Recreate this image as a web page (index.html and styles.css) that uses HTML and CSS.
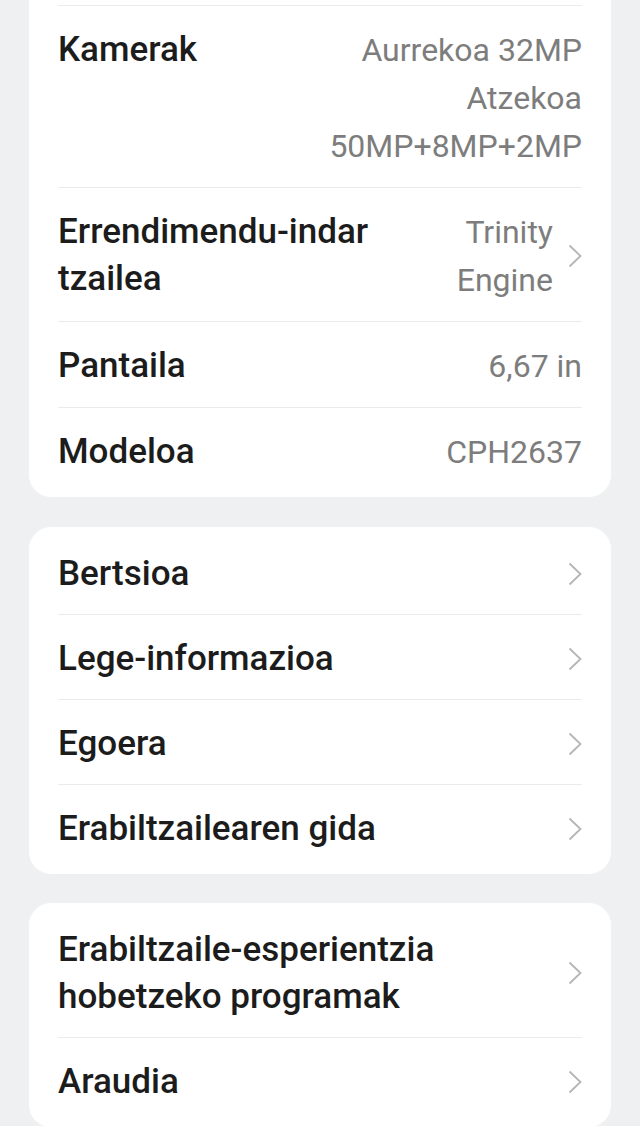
FILE: index.html
```html
<!DOCTYPE html>
<html lang="eu">
<head>
    <meta charset="UTF-8">
    <meta name="viewport" content="width=device-width, initial-scale=1.0">
    <title>Telefonoari buruz</title>
    <link rel="stylesheet" href="styles.css">
</head>
<body>
    <div class="card card-cut">
        <div class="row">
            <div class="label">Kamerak</div>
            <div class="value">Aurrekoa 32MP<br>Atzekoa<br>50MP+8MP+2MP</div>
        </div>
        <div class="row">
            <div class="label">Errendimendu-indar tzailea</div>
            <div class="value">Trinity<br>Engine</div>
            <svg class="chevron" viewBox="0 0 14 24"><path d="M1.5 1.5 L12.5 12 L1.5 22.5"/></svg>
        </div>
        <div class="row">
            <div class="label">Pantaila</div>
            <div class="value">6,67 in</div>
        </div>
        <div class="row">
            <div class="label">Modeloa</div>
            <div class="value">CPH2637</div>
        </div>
    </div>

    <div class="card">
        <div class="row">
            <div class="label">Bertsioa</div>
            <svg class="chevron" viewBox="0 0 14 24"><path d="M1.5 1.5 L12.5 12 L1.5 22.5"/></svg>
        </div>
        <div class="row">
            <div class="label">Lege-informazioa</div>
            <svg class="chevron" viewBox="0 0 14 24"><path d="M1.5 1.5 L12.5 12 L1.5 22.5"/></svg>
        </div>
        <div class="row">
            <div class="label">Egoera</div>
            <svg class="chevron" viewBox="0 0 14 24"><path d="M1.5 1.5 L12.5 12 L1.5 22.5"/></svg>
        </div>
        <div class="row">
            <div class="label">Erabiltzailearen gida</div>
            <svg class="chevron" viewBox="0 0 14 24"><path d="M1.5 1.5 L12.5 12 L1.5 22.5"/></svg>
        </div>
    </div>

    <div class="card">
        <div class="row">
            <div class="label">Erabiltzaile-esperientzia<br>hobetzeko programak</div>
            <svg class="chevron" viewBox="0 0 14 24"><path d="M1.5 1.5 L12.5 12 L1.5 22.5"/></svg>
        </div>
        <div class="row">
            <div class="label">Araudia</div>
            <svg class="chevron" viewBox="0 0 14 24"><path d="M1.5 1.5 L12.5 12 L1.5 22.5"/></svg>
        </div>
    </div>
</body>
</html>
```

FILE: styles.css
```css
body {
    margin: 0;
    padding: 0 29px;
    background: #eff0f2;
    font-family: Roboto, 'Noto Sans', sans-serif;
}

.card {
    background: #fff;
    border-radius: 22px;
    padding: 3px 29px 5px;
    margin-bottom: 29px;
}

/* top of this card is scrolled off the screen */
.card-cut {
    border-top-left-radius: 0;
    border-top-right-radius: 0;
    padding-top: 5px;
    padding-bottom: 4px;
    margin-bottom: 30px;
}

.card-cut .row:first-child {
    border-top: 1px solid #ebebeb;
}

.row {
    display: flex;
    align-items: flex-start;
    padding: 20px 0 17px;
    line-height: 47px;
}

.row + .row {
    border-top: 1px solid #ebebeb;
}

.label {
    flex: 1;
    font-size: 35px;
    font-weight: 500;
    color: #1c1c1c;
}

.value {
    margin-left: 20px;
    font-size: 32px;
    line-height: 48px;
    color: #7d7d7d;
    text-align: right;
    white-space: nowrap;
}

.chevron {
    align-self: center;
    width: 14px;
    height: 24px;
    margin-left: 15px;
    fill: none;
    stroke: #b5b5b5;
    stroke-width: 1.8;
}
```
